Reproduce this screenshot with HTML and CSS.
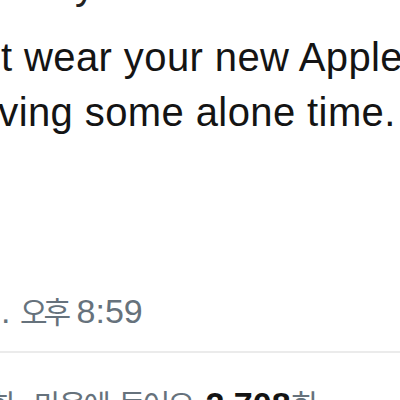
FILE: index.html
```html
<!DOCTYPE html>
<html lang="ko">
<head>
<meta charset="utf-8">
<link rel="stylesheet" href="styles.css">
</head>
<body>
<div class="tweet">
  <div class="prev"><span class="prev-text">y</span></div>
  <div class="body-text">
    <div class="line">t wear your new Apple Watch</div>
    <div class="line line-2">having some alone time.</div>
  </div>
  <div class="time">. <span class="ko">오후</span> 8:59</div>
  <div class="divider"></div>
  <div class="stats"><span class="ko lead">회</span> <span class="ko">마음에 들어요</span> <b class="num">2,708</b><span class="ko">회</span></div>
</div>
</body>
</html>
```
FILE: styles.css
```css
html, body {
  margin: 0;
  padding: 0;
  background: #ffffff;
  overflow: hidden;
}
.tweet {
  width: 400px;
  height: 400px;
  overflow: hidden;
  font-family: "Liberation Sans", "Noto Sans CJK KR", sans-serif;
}
.prev {
  height: 8px;
  overflow: hidden;
  position: relative;
}
.prev-text {
  position: absolute;
  left: 75px;
  bottom: 3px;
  font-size: 40px;
  line-height: 40px;
  color: #222;
}
.body-text {
  margin-top: 22px;
  font-size: 40px;
  line-height: 55px;
  color: #141414;
  white-space: nowrap;
  letter-spacing: 0.4px;
}
.line {
  padding-left: 1px;
}
.line-2 {
  margin-left: -48px;
}
.time {
  margin-top: 150px;
  font-size: 34px;
  line-height: 40px;
  color: #66727c;
  white-space: nowrap;
  padding-left: 1px;
}
.ko {
  font-family: "Noto Sans CJK KR", sans-serif;
  font-size: 30px;
  letter-spacing: -4px;
}
.divider {
  margin-top: 20px;
  height: 2px;
  background: #ebebeb;
}
.stats {
  margin-top: 30px;
  font-size: 34px;
  line-height: 40px;
  color: #66727c;
  white-space: nowrap;
}
.stats .ko {
  letter-spacing: -3px;
  word-spacing: 5px;
}
.lead {
  margin-left: -12px;
  margin-right: 12px;
}
.num {
  color: #141414;
  font-weight: 700;
  margin-left: 4px;
}
```
